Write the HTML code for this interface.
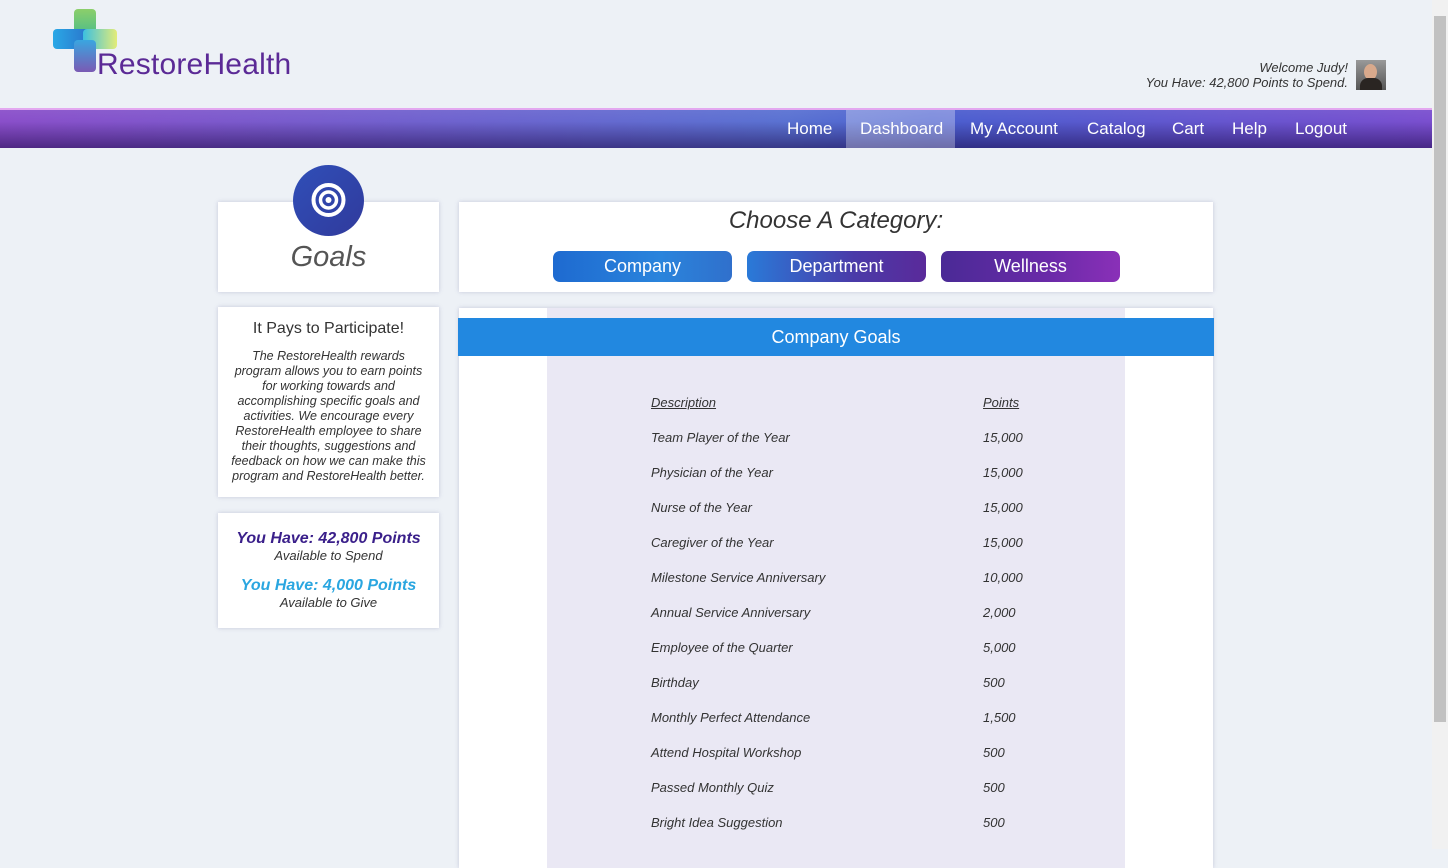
<!DOCTYPE html>
<html><head><meta charset="utf-8"><style>
*{margin:0;padding:0;box-sizing:border-box}
body{width:1448px;height:849px;overflow:hidden;background:#edf1f6;font-family:"Liberation Sans",sans-serif;position:relative}
.abs{position:absolute}
.nav{left:0;top:108px;width:1432px;height:40px;border-top:2px solid #e3a8f0;
background:linear-gradient(to bottom,rgba(255,255,255,.05) 0%,rgba(0,0,0,0) 30%,rgba(20,0,60,.5) 100%),linear-gradient(to right,#8a4fca 0%,#5a72d2 55%,#4a5fcf 65%,#7a4fcf 100%)}
.nav a{position:absolute;top:0;height:38px;line-height:38px;color:#fff;font-size:17px;text-decoration:none}
.card{background:#fff;box-shadow:0 0 4px rgba(120,120,170,.35)}
.btn{position:absolute;top:251px;width:179px;height:31px;border-radius:7px;color:#fff;font-size:18px;text-align:center;line-height:31px}
.row{position:absolute;left:651px;font-size:13px;font-style:italic;color:#333}
.pt{position:absolute;left:983px;font-size:13px;font-style:italic;color:#333}
</style></head><body>
<!-- logo -->
<div class="abs" style="left:74px;top:9px;width:22px;height:40px;border-radius:4px;background:linear-gradient(#8ccf6a,#2bb39a)"></div>
<div class="abs" style="left:53px;top:29px;width:40px;height:20px;border-radius:4px;background:linear-gradient(to right,#2aa8e6,#2a6ec8)"></div>
<div class="abs" style="left:83px;top:29px;width:34px;height:20px;border-radius:4px;background:linear-gradient(to right,#3cc0e0,#e3ec78)"></div>
<div class="abs" style="left:74px;top:40px;width:22px;height:32px;border-radius:4px;background:linear-gradient(#3aa6e0,#7a5ab4)"></div>
<div class="abs" style="left:97px;top:48px;font-size:30px;color:#5b2a96;letter-spacing:0.2px">RestoreHealth</div>
<!-- welcome -->
<div class="abs" style="right:100px;top:60px;text-align:right;font-size:13px;font-style:italic;color:#333;line-height:15px">Welcome Judy!<br>You Have: 42,800 Points to Spend.</div>
<div class="abs" style="left:1356px;top:60px;width:30px;height:30px;background:linear-gradient(#999,#555);overflow:hidden"><div style="position:absolute;left:8px;top:4px;width:13px;height:16px;border-radius:50%;background:#d8a98c"></div><div style="position:absolute;left:4px;top:18px;width:22px;height:12px;border-radius:8px 8px 0 0;background:#2a2522"></div></div>
<!-- nav -->
<div class="abs nav">
<a style="left:787px">Home</a>
<div style="position:absolute;left:846px;top:0;width:109px;height:38px;background:rgba(255,255,255,.3)"></div>
<a style="left:860px">Dashboard</a>
<a style="left:970px">My Account</a>
<a style="left:1087px">Catalog</a>
<a style="left:1172px">Cart</a>
<a style="left:1232px">Help</a>
<a style="left:1295px">Logout</a>
</div>
<!-- scrollbar -->
<div class="abs" style="left:1432px;top:0;width:16px;height:849px;background:#f1f1f1"></div>
<div class="abs" style="left:1434px;top:16px;width:12px;height:706px;background:#c1c1c1"></div>
<!-- goals card -->
<div class="abs card" style="left:218px;top:202px;width:221px;height:90px"></div>
<div class="abs" style="left:293px;top:165px;width:71px;height:71px;border-radius:50%;background:linear-gradient(135deg,#2f4fb8,#313a9c)">
<svg width="71" height="71"><circle cx="35.5" cy="35" r="15" fill="none" stroke="#fff" stroke-width="4"/><circle cx="35.5" cy="35" r="8" fill="none" stroke="#fff" stroke-width="3.5"/><circle cx="35.5" cy="35" r="3" fill="#fff"/></svg></div>
<div class="abs" style="left:218px;width:221px;top:241px;text-align:center;font-size:29px;font-style:italic;color:#555">Goals</div>
<!-- pays -->
<div class="abs card" style="left:218px;top:307px;width:221px;height:190px;text-align:center">
<div style="margin-top:13px;font-size:16px;color:#333">It Pays to Participate!</div>
<div style="margin-top:11px;font-size:12.5px;font-style:italic;color:#333;line-height:15px;white-space:nowrap">The RestoreHealth rewards<br>program allows you to earn points<br>for working towards and<br>accomplishing specific goals and<br>activities. We encourage every<br>RestoreHealth employee to share<br>their thoughts, suggestions and<br>feedback on how we can make this<br>program and RestoreHealth better.</div></div>
<!-- points -->
<div class="abs card" style="left:218px;top:513px;width:221px;height:115px;text-align:center">
<div style="margin-top:17px;font-size:16px;font-weight:bold;font-style:italic;color:#3a1f8a">You Have: 42,800 Points</div>
<div style="font-size:13px;font-style:italic;color:#333">Available to Spend</div>
<div style="margin-top:14px;font-size:16px;font-weight:bold;font-style:italic;color:#2aa6e0">You Have: 4,000 Points</div>
<div style="font-size:13px;font-style:italic;color:#333">Available to Give</div></div>
<!-- category -->
<div class="abs card" style="left:459px;top:202px;width:754px;height:90px"></div>
<div class="abs" style="left:459px;width:754px;top:207px;text-align:center;font-size:24px;font-style:italic;color:#333">Choose A Category:</div>
<div class="btn" style="left:553px;background:linear-gradient(to right,#1e6ad0,#2a84dc 60%,#3070cc)">Company</div>
<div class="btn" style="left:747px;background:linear-gradient(to right,#2a7ad8,#4a3aa8 60%,#5a2a9a)">Department</div>
<div class="btn" style="left:941px;background:linear-gradient(to right,#4a2a96,#6a2aa8 60%,#8a30b8)">Wellness</div>
<!-- table -->
<div class="abs card" style="left:459px;top:308px;width:754px;height:560px"></div>
<div class="abs" style="left:547px;top:308px;width:578px;height:560px;background:#eae8f4"></div>
<div class="abs" style="left:458px;top:318px;width:756px;height:38px;background:#2288e0;color:#fff;font-size:18px;text-align:center;line-height:38px">Company Goals</div>
<div class="row" style="top:395px;text-decoration:underline">Description</div><div class="pt" style="top:395px;text-decoration:underline">Points</div>
<div class="row" style="top:430px">Team Player of the Year</div><div class="pt" style="top:430px">15,000</div>
<div class="row" style="top:465px">Physician of the Year</div><div class="pt" style="top:465px">15,000</div>
<div class="row" style="top:500px">Nurse of the Year</div><div class="pt" style="top:500px">15,000</div>
<div class="row" style="top:535px">Caregiver of the Year</div><div class="pt" style="top:535px">15,000</div>
<div class="row" style="top:570px">Milestone Service Anniversary</div><div class="pt" style="top:570px">10,000</div>
<div class="row" style="top:605px">Annual Service Anniversary</div><div class="pt" style="top:605px">2,000</div>
<div class="row" style="top:640px">Employee of the Quarter</div><div class="pt" style="top:640px">5,000</div>
<div class="row" style="top:675px">Birthday</div><div class="pt" style="top:675px">500</div>
<div class="row" style="top:710px">Monthly Perfect Attendance</div><div class="pt" style="top:710px">1,500</div>
<div class="row" style="top:745px">Attend Hospital Workshop</div><div class="pt" style="top:745px">500</div>
<div class="row" style="top:780px">Passed Monthly Quiz</div><div class="pt" style="top:780px">500</div>
<div class="row" style="top:815px">Bright Idea Suggestion</div><div class="pt" style="top:815px">500</div>
</body></html>
